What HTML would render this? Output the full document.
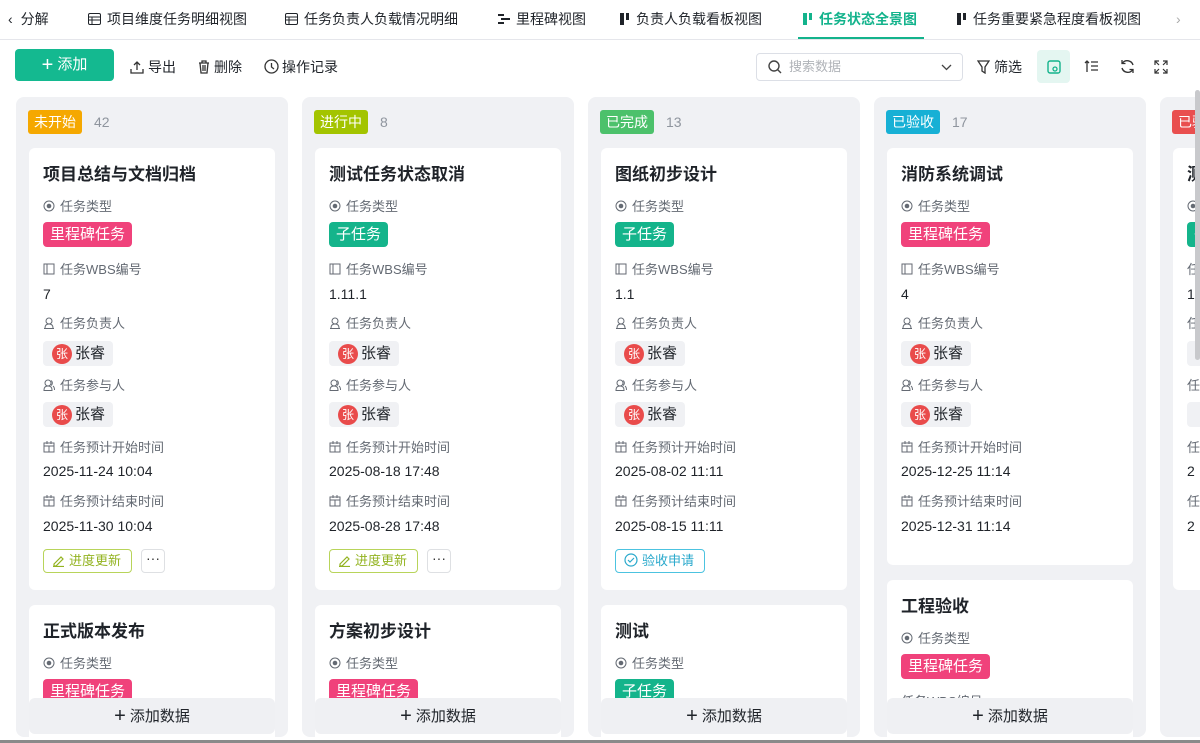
<!DOCTYPE html>
<html><head><meta charset="utf-8"><style>
*{box-sizing:border-box;margin:0;padding:0}
html{width:1200px;height:743px;overflow:hidden}
body{width:1200px;height:743px;overflow:hidden;background:#fff;font-family:"Liberation Sans","Noto Sans CJK SC",sans-serif;color:#1f2329;position:relative}
.a{position:absolute}
.tab{position:absolute;top:9px;font-size:14px;color:#1f2329;line-height:20px;white-space:nowrap}
.tab i{display:inline-block;vertical-align:-1px;margin-right:6px}
.tb{position:absolute;top:58px;font-size:14px;line-height:18px;color:#1f2329;white-space:nowrap}
.col{position:absolute;top:97px;width:272px;height:640px;background:#f0f1f4;border-radius:8px;overflow:hidden}
.st{position:absolute;left:12px;top:13px;height:24px;line-height:24px;padding:0 6px;border-radius:3px;color:#fff;font-size:14px}
.cnt{position:absolute;top:13px;line-height:24px;font-size:14px;color:#8f959e}
.card{position:absolute;left:13px;width:246px;background:#fff;border-radius:6px;overflow:hidden}
.card>*{position:absolute;left:14px;white-space:nowrap}
.t{top:15px;font-size:17px;font-weight:bold;line-height:24px;color:#1f2329}
.l{font-size:13px;color:#646a73;line-height:18px}
.l svg{vertical-align:-1px;margin-right:5px}
.v{font-size:14px;line-height:18px;color:#1f2329}
.tag{height:25px;line-height:25px;padding:0 7px;border-radius:4px;color:#fff;font-size:15px}
.pk{background:#f0427b}.gr{background:#14b48b}
.chip{height:25px;width:70px;background:#f0f1f4;border-radius:4px;font-size:15px;line-height:25px;padding-left:32px;color:#1f2329}
.chip b{position:absolute;left:9px;top:3px;width:20px;height:20px;border-radius:50%;background:#e94b4b;color:#fff;font-weight:normal;font-size:12px;line-height:20px;text-align:center}
.btn{height:24px;border-radius:4px;font-size:13px;line-height:22px;padding:0 10px 0 8px}
.btn svg{vertical-align:-2px;margin-right:4px}
.more{height:24px;width:24px;border:1px solid #dee0e3;border-radius:4px;text-align:center;line-height:16px;font-size:14px;color:#333;letter-spacing:0}
.add{position:absolute;left:13px;top:601px;width:246px;height:36px;background:#eff0f3;border-radius:6px;text-align:center;line-height:36px;font-size:15px;color:#1f2329}
</style></head><body>
<div class="a" style="left:0;top:39px;width:1200px;height:1px;background:#e5e6eb"></div>
<div class="tab" style="left:8px"><span style="margin-right:8px">&#8249;</span>分解</div>
<div class="tab" style="left:88px"><i><svg width="13" height="12"><rect x=".5" y=".5" width="12" height="11" rx="1.5" fill="none" stroke="#1f2329"/><path d="M1 4h11M1 7h11M4 4v7" stroke="#1f2329"/></svg></i>项目维度任务明细视图</div>
<div class="tab" style="left:285px"><i><svg width="13" height="12"><rect x=".5" y=".5" width="12" height="11" rx="1.5" fill="none" stroke="#1f2329"/><path d="M1 4h11M1 7h11M4 4v7" stroke="#1f2329"/></svg></i>任务负责人负载情况明细</div>
<div class="tab" style="left:498px"><i><svg width="12" height="12"><path d="M0 2h6M3 6h9M0 10h6" stroke="#1f2329" stroke-width="2"/></svg></i>里程碑视图</div>
<div class="tab" style="left:620px"><i><svg width="10" height="12"><rect x="0" y="0" width="4" height="12" fill="#1f2329"/><rect x="6" y="0" width="3" height="7" fill="#1f2329"/></svg></i>负责人负载看板视图</div>
<div class="tab" style="left:803px;color:#13b38c;font-weight:bold"><i><svg width="10" height="12"><rect x="0" y="0" width="4" height="12" fill="#13b38c"/><rect x="6" y="0" width="3" height="7" fill="#13b38c"/></svg></i>任务状态全景图</div>
<div class="a" style="left:798px;top:37px;width:126px;height:2px;background:#13b38c"></div>
<div class="tab" style="left:957px"><i><svg width="10" height="12"><rect x="0" y="0" width="4" height="12" fill="#1f2329"/><rect x="6" y="0" width="3" height="7" fill="#1f2329"/></svg></i>任务重要紧急程度看板视图</div>
<div class="tab" style="left:1176px;color:#aaa">&#8250;</div>
<div class="a" style="left:15px;top:49px;width:99px;height:32px;background:#14b990;border-radius:4px;color:#fff;font-size:15px;line-height:32px;text-align:center"><span style="font-size:20px;vertical-align:-2px">+</span> 添加</div>
<div class="tb" style="left:130px"><svg width="14" height="14" style="vertical-align:-2px;margin-right:4px"><path d="M7 10V2M4 5l3-3 3 3M1 9v4h12V9" fill="none" stroke="#333" stroke-width="1.3"/></svg>导出</div>
<div class="tb" style="left:198px"><svg width="12" height="14" style="vertical-align:-2px;margin-right:4px"><path d="M1 3h10M4 3V1h4v2M2 3l1 10h6l1-10M5 5v6M7 5v6" fill="none" stroke="#333" stroke-width="1.3"/></svg>删除</div>
<div class="tb" style="left:264px"><svg width="15" height="15" style="vertical-align:-2px;margin-right:3px"><circle cx="7.5" cy="7.5" r="6.5" fill="none" stroke="#333" stroke-width="1.3"/><path d="M7.5 4v4l2.5 2" fill="none" stroke="#333" stroke-width="1.3"/></svg>操作记录</div>
<div class="a" style="left:756px;top:53px;width:207px;height:28px;border:1px solid #dcdfe6;border-radius:4px;font-size:13px;color:#b0b3b8;line-height:26px;padding-left:32px">搜索数据
<svg class="a" style="left:11px;top:6px" width="14" height="14"><circle cx="6" cy="6" r="5" fill="none" stroke="#444" stroke-width="1.4"/><path d="M9.5 9.5L13 13" stroke="#444" stroke-width="1.4"/></svg>
<svg class="a" style="left:184px;top:10px" width="11" height="7"><path d="M1 1l4.5 4.5L10 1" fill="none" stroke="#444" stroke-width="1.3"/></svg></div>
<div class="tb" style="left:977px"><svg width="13" height="14" style="vertical-align:-2px;margin-right:4px"><path d="M1 1h11L8 7v6L5 11V7z" fill="none" stroke="#333" stroke-width="1.3"/></svg>筛选</div>
<div class="a" style="left:1037px;top:50px;width:33px;height:33px;background:#e4f6f1;border-radius:4px"><svg class="a" style="left:10px;top:10px" width="14" height="14"><rect x="1" y="1" width="12" height="12" rx="2" fill="none" stroke="#13b38c" stroke-width="1.4"/><circle cx="8" cy="9" r="2" fill="none" stroke="#13b38c" stroke-width="1.3"/></svg></div>
<svg class="a" style="left:1084px;top:60px" width="15" height="13"><path d="M3 12V1M1 3l2-2 2 2M7 2h7M7 6h7M7 10h7" fill="none" stroke="#333" stroke-width="1.3"/></svg>
<svg class="a" style="left:1120px;top:59px" width="15" height="15"><path d="M13 6A6 6 0 0 0 2.5 4M2 9a6 6 0 0 0 10.5 2" fill="none" stroke="#333" stroke-width="1.4"/><path d="M2 1v3.5h3.5M13 14v-3.5H9.5" fill="none" stroke="#333" stroke-width="1.3"/></svg>
<svg class="a" style="left:1154px;top:60px" width="14" height="14"><path d="M1 5V1h4M9 1h4v4M13 9v4H9M5 13H1V9M1 1l4 4M13 1L9 5M13 13L9 9M1 13l4-4" fill="none" stroke="#333" stroke-width="1.2"/></svg>

<div class="col" style="left:16px">
<div class="st" style="background:#f5a800">未开始</div><div class="cnt" style="left:78px">42</div>
<div class="card" style="top:51px;height:442px">
<div class="t">项目总结与文档归档</div>
<div class="l" style="top:50px"><svg width="12" height="12"><circle cx="6" cy="6" r="5" fill="none" stroke="#646a73"/><circle cx="6" cy="6" r="2.3" fill="#646a73"/></svg>任务类型</div>
<div class="tag pk" style="top:74px">里程碑任务</div>
<div class="l" style="top:113px"><svg width="12" height="12"><rect x="1" y="1" width="10" height="10" fill="none" stroke="#646a73"/><path d="M4 1v10" stroke="#646a73"/></svg>任务WBS编号</div>
<div class="v" style="top:137px">7</div>
<div class="l" style="top:167px"><svg width="12" height="12"><circle cx="6" cy="4" r="3" fill="none" stroke="#646a73"/><path d="M1 11.5h10M2 11c0-3 2-4 4-4s4 1 4 4" fill="none" stroke="#646a73"/></svg>任务负责人</div>
<div class="chip" style="top:193px"><b>张</b>张睿</div>
<div class="l" style="top:229px"><svg width="12" height="12"><circle cx="5" cy="4" r="3" fill="none" stroke="#646a73"/><path d="M0.5 11.5h9M1 11c0-3 2-4 4-4s4 1 4 4M8 1.5a3 3 0 0 1 0 5M10 7c1 .8 1.5 2 1.5 4" fill="none" stroke="#646a73"/></svg>任务参与人</div>
<div class="chip" style="top:254px"><b>张</b>张睿</div>
<div class="l" style="top:291px"><svg width="12" height="12"><rect x="1" y="2" width="10" height="9" fill="none" stroke="#646a73"/><path d="M1 5h10M4 0v3M8 0v3M6 5v6" stroke="#646a73"/></svg>任务预计开始时间</div>
<div class="v" style="top:314px">2025-11-24 10:04</div>
<div class="l" style="top:345px"><svg width="12" height="12"><rect x="1" y="2" width="10" height="9" fill="none" stroke="#646a73"/><path d="M1 5h10M4 0v3M8 0v3M6 5v6" stroke="#646a73"/></svg>任务预计结束时间</div>
<div class="v" style="top:369px">2025-11-30 10:04</div>
<div class="btn" style="top:401px;border:1px solid #b8d45a;color:#93b321"><svg width="13" height="13"><path d="M2 10l7-7 2 2-7 7H2zM1 12.5h11" fill="none" stroke="#93b321" stroke-width="1.2"/></svg>进度更新</div>
<div class="more" style="top:401px;left:112px">···</div>
</div>
<div class="card" style="top:508px;height:200px">
<div class="t">正式版本发布</div>
<div class="l" style="top:50px"><svg width="12" height="12"><circle cx="6" cy="6" r="5" fill="none" stroke="#646a73"/><circle cx="6" cy="6" r="2.3" fill="#646a73"/></svg>任务类型</div>
<div class="tag pk" style="top:74px">里程碑任务</div>
</div>
<div class="add"><span style="font-size:20px;vertical-align:-1px">+</span> 添加数据</div>
</div>

<div class="col" style="left:302px">
<div class="st" style="background:#a3c400">进行中</div><div class="cnt" style="left:78px">8</div>
<div class="card" style="top:51px;height:442px">
<div class="t">测试任务状态取消</div>
<div class="l" style="top:50px"><svg width="12" height="12"><circle cx="6" cy="6" r="5" fill="none" stroke="#646a73"/><circle cx="6" cy="6" r="2.3" fill="#646a73"/></svg>任务类型</div>
<div class="tag gr" style="top:74px">子任务</div>
<div class="l" style="top:113px"><svg width="12" height="12"><rect x="1" y="1" width="10" height="10" fill="none" stroke="#646a73"/><path d="M4 1v10" stroke="#646a73"/></svg>任务WBS编号</div>
<div class="v" style="top:137px">1.11.1</div>
<div class="l" style="top:167px"><svg width="12" height="12"><circle cx="6" cy="4" r="3" fill="none" stroke="#646a73"/><path d="M1 11.5h10M2 11c0-3 2-4 4-4s4 1 4 4" fill="none" stroke="#646a73"/></svg>任务负责人</div>
<div class="chip" style="top:193px"><b>张</b>张睿</div>
<div class="l" style="top:229px"><svg width="12" height="12"><circle cx="5" cy="4" r="3" fill="none" stroke="#646a73"/><path d="M0.5 11.5h9M1 11c0-3 2-4 4-4s4 1 4 4M8 1.5a3 3 0 0 1 0 5M10 7c1 .8 1.5 2 1.5 4" fill="none" stroke="#646a73"/></svg>任务参与人</div>
<div class="chip" style="top:254px"><b>张</b>张睿</div>
<div class="l" style="top:291px"><svg width="12" height="12"><rect x="1" y="2" width="10" height="9" fill="none" stroke="#646a73"/><path d="M1 5h10M4 0v3M8 0v3M6 5v6" stroke="#646a73"/></svg>任务预计开始时间</div>
<div class="v" style="top:314px">2025-08-18 17:48</div>
<div class="l" style="top:345px"><svg width="12" height="12"><rect x="1" y="2" width="10" height="9" fill="none" stroke="#646a73"/><path d="M1 5h10M4 0v3M8 0v3M6 5v6" stroke="#646a73"/></svg>任务预计结束时间</div>
<div class="v" style="top:369px">2025-08-28 17:48</div>
<div class="btn" style="top:401px;border:1px solid #b8d45a;color:#93b321"><svg width="13" height="13"><path d="M2 10l7-7 2 2-7 7H2zM1 12.5h11" fill="none" stroke="#93b321" stroke-width="1.2"/></svg>进度更新</div>
<div class="more" style="top:401px;left:112px">···</div>
</div>
<div class="card" style="top:508px;height:200px">
<div class="t">方案初步设计</div>
<div class="l" style="top:50px"><svg width="12" height="12"><circle cx="6" cy="6" r="5" fill="none" stroke="#646a73"/><circle cx="6" cy="6" r="2.3" fill="#646a73"/></svg>任务类型</div>
<div class="tag pk" style="top:74px">里程碑任务</div>
</div>
<div class="add"><span style="font-size:20px;vertical-align:-1px">+</span> 添加数据</div>
</div>

<div class="col" style="left:588px">
<div class="st" style="background:#4cc16b">已完成</div><div class="cnt" style="left:78px">13</div>
<div class="card" style="top:51px;height:442px">
<div class="t">图纸初步设计</div>
<div class="l" style="top:50px"><svg width="12" height="12"><circle cx="6" cy="6" r="5" fill="none" stroke="#646a73"/><circle cx="6" cy="6" r="2.3" fill="#646a73"/></svg>任务类型</div>
<div class="tag gr" style="top:74px">子任务</div>
<div class="l" style="top:113px"><svg width="12" height="12"><rect x="1" y="1" width="10" height="10" fill="none" stroke="#646a73"/><path d="M4 1v10" stroke="#646a73"/></svg>任务WBS编号</div>
<div class="v" style="top:137px">1.1</div>
<div class="l" style="top:167px"><svg width="12" height="12"><circle cx="6" cy="4" r="3" fill="none" stroke="#646a73"/><path d="M1 11.5h10M2 11c0-3 2-4 4-4s4 1 4 4" fill="none" stroke="#646a73"/></svg>任务负责人</div>
<div class="chip" style="top:193px"><b>张</b>张睿</div>
<div class="l" style="top:229px"><svg width="12" height="12"><circle cx="5" cy="4" r="3" fill="none" stroke="#646a73"/><path d="M0.5 11.5h9M1 11c0-3 2-4 4-4s4 1 4 4M8 1.5a3 3 0 0 1 0 5M10 7c1 .8 1.5 2 1.5 4" fill="none" stroke="#646a73"/></svg>任务参与人</div>
<div class="chip" style="top:254px"><b>张</b>张睿</div>
<div class="l" style="top:291px"><svg width="12" height="12"><rect x="1" y="2" width="10" height="9" fill="none" stroke="#646a73"/><path d="M1 5h10M4 0v3M8 0v3M6 5v6" stroke="#646a73"/></svg>任务预计开始时间</div>
<div class="v" style="top:314px">2025-08-02 11:11</div>
<div class="l" style="top:345px"><svg width="12" height="12"><rect x="1" y="2" width="10" height="9" fill="none" stroke="#646a73"/><path d="M1 5h10M4 0v3M8 0v3M6 5v6" stroke="#646a73"/></svg>任务预计结束时间</div>
<div class="v" style="top:369px">2025-08-15 11:11</div>
<div class="btn" style="top:401px;border:1px solid #4cc3e0;color:#2aa9cc"><svg width="14" height="14"><circle cx="7" cy="7" r="6" fill="none" stroke="#2aa9cc" stroke-width="1.2"/><path d="M4 7l2 2 4-4" fill="none" stroke="#2aa9cc" stroke-width="1.2"/></svg>验收申请</div>
</div>
<div class="card" style="top:508px;height:200px">
<div class="t">测试</div>
<div class="l" style="top:50px"><svg width="12" height="12"><circle cx="6" cy="6" r="5" fill="none" stroke="#646a73"/><circle cx="6" cy="6" r="2.3" fill="#646a73"/></svg>任务类型</div>
<div class="tag gr" style="top:74px">子任务</div>
</div>
<div class="add"><span style="font-size:20px;vertical-align:-1px">+</span> 添加数据</div>
</div>

<div class="col" style="left:874px">
<div class="st" style="background:#17b0d5">已验收</div><div class="cnt" style="left:78px">17</div>
<div class="card" style="top:51px;height:417px">
<div class="t">消防系统调试</div>
<div class="l" style="top:50px"><svg width="12" height="12"><circle cx="6" cy="6" r="5" fill="none" stroke="#646a73"/><circle cx="6" cy="6" r="2.3" fill="#646a73"/></svg>任务类型</div>
<div class="tag pk" style="top:74px">里程碑任务</div>
<div class="l" style="top:113px"><svg width="12" height="12"><rect x="1" y="1" width="10" height="10" fill="none" stroke="#646a73"/><path d="M4 1v10" stroke="#646a73"/></svg>任务WBS编号</div>
<div class="v" style="top:137px">4</div>
<div class="l" style="top:167px"><svg width="12" height="12"><circle cx="6" cy="4" r="3" fill="none" stroke="#646a73"/><path d="M1 11.5h10M2 11c0-3 2-4 4-4s4 1 4 4" fill="none" stroke="#646a73"/></svg>任务负责人</div>
<div class="chip" style="top:193px"><b>张</b>张睿</div>
<div class="l" style="top:229px"><svg width="12" height="12"><circle cx="5" cy="4" r="3" fill="none" stroke="#646a73"/><path d="M0.5 11.5h9M1 11c0-3 2-4 4-4s4 1 4 4M8 1.5a3 3 0 0 1 0 5M10 7c1 .8 1.5 2 1.5 4" fill="none" stroke="#646a73"/></svg>任务参与人</div>
<div class="chip" style="top:254px"><b>张</b>张睿</div>
<div class="l" style="top:291px"><svg width="12" height="12"><rect x="1" y="2" width="10" height="9" fill="none" stroke="#646a73"/><path d="M1 5h10M4 0v3M8 0v3M6 5v6" stroke="#646a73"/></svg>任务预计开始时间</div>
<div class="v" style="top:314px">2025-12-25 11:14</div>
<div class="l" style="top:345px"><svg width="12" height="12"><rect x="1" y="2" width="10" height="9" fill="none" stroke="#646a73"/><path d="M1 5h10M4 0v3M8 0v3M6 5v6" stroke="#646a73"/></svg>任务预计结束时间</div>
<div class="v" style="top:369px">2025-12-31 11:14</div>
</div>
<div class="card" style="top:483px;height:200px">
<div class="t">工程验收</div>
<div class="l" style="top:50px"><svg width="12" height="12"><circle cx="6" cy="6" r="5" fill="none" stroke="#646a73"/><circle cx="6" cy="6" r="2.3" fill="#646a73"/></svg>任务类型</div>
<div class="tag pk" style="top:74px">里程碑任务</div>
<div class="l" style="top:113px">任务WBS编号</div>
</div>
<div class="add"><span style="font-size:20px;vertical-align:-1px">+</span> 添加数据</div>
</div>

<div class="col" style="left:1160px">
<div class="st" style="background:#e94f4f">已验收</div>
<div class="card" style="top:51px;height:442px">
<div class="t">测试</div>
<div class="l" style="top:50px"><svg width="12" height="12"><circle cx="6" cy="6" r="5" fill="none" stroke="#646a73"/><circle cx="6" cy="6" r="2.3" fill="#646a73"/></svg>任务类型</div>
<div class="tag gr" style="top:74px">子任务</div>
<div class="l" style="top:113px">任务</div>
<div class="v" style="top:137px">1</div>
<div class="l" style="top:167px">任务</div>
<div class="chip" style="top:193px"></div>
<div class="l" style="top:229px">任务</div>
<div class="chip" style="top:254px"></div>
<div class="l" style="top:291px">任务</div>
<div class="v" style="top:314px">2</div>
<div class="l" style="top:345px">任务</div>
<div class="v" style="top:369px">2</div>
</div>
</div>
<div class="a" style="left:1195px;top:90px;width:5px;height:270px;background:#c8c9cc;border-radius:3px"></div>
<div class="a" style="left:0;top:740px;width:1200px;height:3px;background:#8a8a8a"></div>
</body></html>
